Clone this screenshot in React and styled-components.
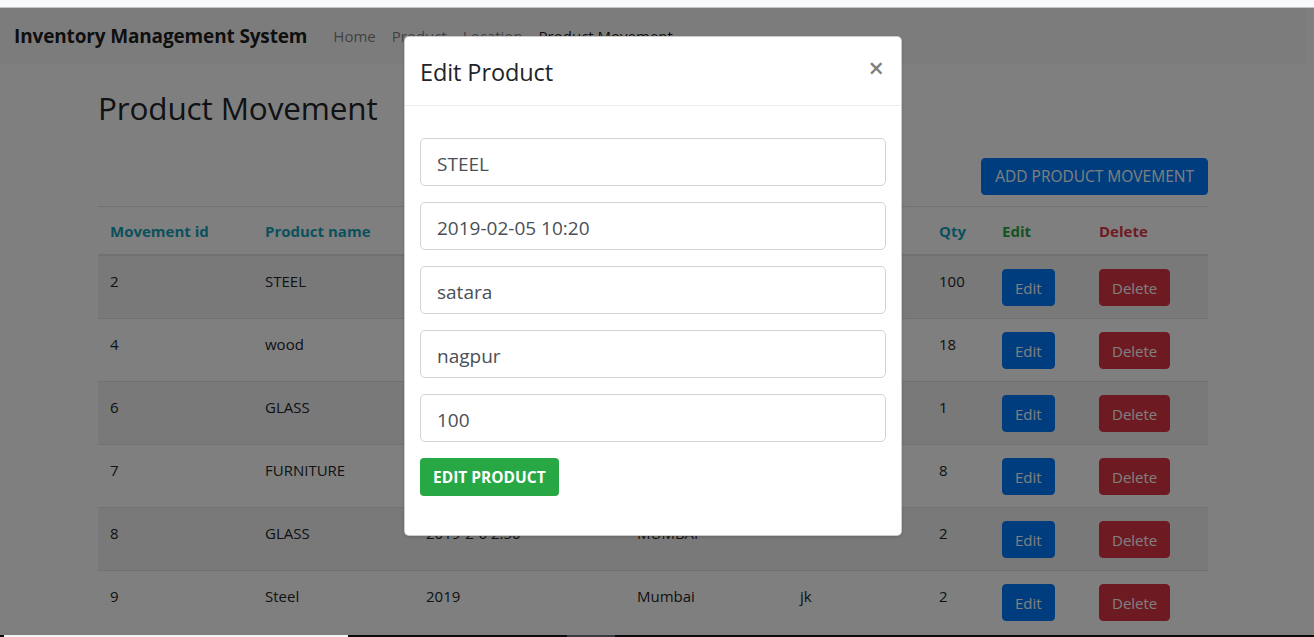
import React from 'react';
import styled, { createGlobalStyle } from 'styled-components';

const GlobalStyle = createGlobalStyle`
    html, body {
        margin: 0;
        padding: 0;
        overflow: hidden;
    }
    body {
        font-family: "Open Sans", "Noto Sans", Arial, sans-serif;
        color: #212529;
        background: #fff;
    }
    * {
        box-sizing: border-box;
    }
`;

const movements = [
    { id: 2, product: 'STEEL', time: '2019-02-05 10:20', from: 'satara', to: 'nagpur', qty: 100 },
    { id: 4, product: 'wood', time: '2019-02-05 11:00', from: 'pune', to: 'satara', qty: 18 },
    { id: 6, product: 'GLASS', time: '2019-02-06 09:15', from: 'nagpur', to: 'pune', qty: 1 },
    { id: 7, product: 'FURNITURE', time: '2019-02-06 12:40', from: 'pune', to: 'MUMBAI', qty: 8 },
    { id: 8, product: 'GLASS', time: '2019-2-6 2:50', from: 'MUMBAI', to: '', qty: 2 },
    { id: 9, product: 'Steel', time: '2019', from: 'Mumbai', to: 'jk', qty: 2 },
];

const columns = [
    { label: 'Movement id', width: 155, tone: 'info' },
    { label: 'Product name', width: 161, tone: 'info' },
    { label: 'Timestamp', width: 211, tone: 'info' },
    { label: 'From location', width: 163, tone: 'info' },
    { label: 'To location', width: 139, tone: 'info' },
    { label: 'Qty', width: 63, tone: 'info' },
    { label: 'Edit', width: 97, tone: 'success' },
    { label: 'Delete', width: 121, tone: 'danger' },
];

const tones = {
    info: '#17a2b8',
    success: '#28a745',
    danger: '#dc3545',
    primary: '#007bff',
};

const fields = ['STEEL', '2019-02-05 10:20', 'satara', 'nagpur', '100'];

const App = () => {
    return (
        <Screen>
            <GlobalStyle />
            <BrowserStrip />
            <Viewport>
                <Page>
                    <Navbar>
                        <Brand>Inventory Management System</Brand>
                        <NavLinks>
                            <NavLink>Home</NavLink>
                            <NavLink>Product</NavLink>
                            <NavLink>Location</NavLink>
                            <NavLink active>Product Movement</NavLink>
                        </NavLinks>
                    </Navbar>
                    <Container>
                        <Heading>Product Movement</Heading>
                        <Toolbar>
                            <Button tone="primary">ADD PRODUCT MOVEMENT</Button>
                        </Toolbar>
                        <Table>
                            <thead>
                                <tr>
                                    {columns.map((col) => (
                                        <Th key={col.label} tone={col.tone} style={{ width: col.width }}>
                                            {col.label}
                                        </Th>
                                    ))}
                                </tr>
                            </thead>
                            <tbody>
                                {movements.map((m, i) => (
                                    <Row key={m.id} striped={i % 2 === 0}>
                                        <Td>{m.id}</Td>
                                        <Td>{m.product}</Td>
                                        <Td>{m.time}</Td>
                                        <Td>{m.from}</Td>
                                        <Td>{m.to}</Td>
                                        <Td>{m.qty}</Td>
                                        <Td>
                                            <RowButton tone="primary">Edit</RowButton>
                                        </Td>
                                        <Td>
                                            <RowButton tone="danger">Delete</RowButton>
                                        </Td>
                                    </Row>
                                ))}
                            </tbody>
                        </Table>
                    </Container>
                </Page>
                <Gutter />
                <Backdrop />
                <ModalLayer>
                    <Modal>
                        <ModalHeader>
                            <ModalTitle>Edit Product</ModalTitle>
                            <Close>&times;</Close>
                        </ModalHeader>
                        <ModalBody>
                            {fields.map((value) => (
                                <Input key={value} defaultValue={value} />
                            ))}
                            <SubmitButton>EDIT PRODUCT</SubmitButton>
                        </ModalBody>
                    </Modal>
                </ModalLayer>
            </Viewport>
            <Taskbar>
                <TaskSegment w={4} color="#0a0a0a" />
                <TaskSegment w={344} color="#f4f4f4" />
                <TaskSegment w={219} color="#0a0a0a" />
                <TaskSegment w={48} color="#3a3a3e" />
                <TaskSegment grow color="#0a0a0a" />
            </Taskbar>
        </Screen>
    );
};

const Screen = styled.div`
    display: flex;
    flex-direction: column;
    width: 1314px;
    height: 637px;
    overflow: hidden;
`;

const BrowserStrip = styled.div`
    height: 8px;
    flex: none;
    background: #f8f9fa;
    border-bottom: 1px solid #c4c6c4;
`;

const Viewport = styled.div`
    position: relative;
    flex: 1;
    display: flex;
    overflow: hidden;
`;

const Page = styled.div`
    width: 1306px;
    flex: none;
    background: #fff;
`;

const Gutter = styled.div`
    flex: 1;
    background: #fff;
`;

const Navbar = styled.nav`
    display: flex;
    align-items: center;
    height: 56px;
    padding: 0 16px 0 14px;
    background-color: #f8f9fa;
`;

const Brand = styled.div`
    font-size: 19px;
    font-weight: 700;
    color: rgba(0, 0, 0, 0.9);
    margin-right: 18px;
    letter-spacing: -0.15px;
`;

const NavLinks = styled.div`
    display: flex;
`;

const NavLink = styled.a`
    padding: 8px;
    font-size: 15px;
    color: ${(p) => (p.active ? 'rgba(0, 0, 0, 0.9)' : 'rgba(0, 0, 0, 0.5)')};
`;

const Container = styled.div`
    width: 1110px;
    margin: 0 auto;
`;

const Heading = styled.h2`
    margin: 25px 0 0;
    font-size: 31.5px;
    font-weight: 500;
    line-height: 1.2;
    letter-spacing: -0.15px;
`;

const Toolbar = styled.div`
    display: flex;
    justify-content: flex-end;
    margin-top: 31px;
    margin-bottom: 11px;
`;

const Button = styled.button`
    height: 37px;
    padding: 0 13px;
    border: 1px solid ${(p) => tones[p.tone]};
    border-radius: 4px;
    background-color: ${(p) => tones[p.tone]};
    color: #fff;
    font-family: inherit;
    font-size: 15.5px;
    line-height: 1.5;
`;

const RowButton = styled(Button)`
    padding: 0 12px;
    font-size: 15px;
`;

const Table = styled.table`
    width: 100%;
    table-layout: fixed;
    border-collapse: collapse;
`;

const Th = styled.th`
    text-align: left;
    padding: 12px;
    height: 49px;
    font-size: 15px;
    font-weight: 700;
    color: ${(p) => tones[p.tone]};
    border-top: 1px solid #dee2e6;
    border-bottom: 2px solid #dee2e6;
`;

const Row = styled.tr`
    background-color: ${(p) => (p.striped ? 'rgba(0, 0, 0, 0.05)' : 'transparent')};
`;

const Td = styled.td`
    height: 63px;
    padding: 13px 12px 12px;
    vertical-align: top;
    font-size: 15px;
    line-height: 24px;
    border-top: 1px solid #dee2e6;
`;

const Backdrop = styled.div`
    position: absolute;
    inset: 0;
    background-color: rgba(0, 0, 0, 0.5);
`;

const ModalLayer = styled.div`
    position: absolute;
    top: 0;
    left: 0;
    width: 1306px;
    display: flex;
    justify-content: center;
    padding-top: 28px;
`;

const Modal = styled.div`
    width: 498px;
    background: #fff;
    border: 1px solid rgba(0, 0, 0, 0.2);
    border-radius: 5px;
    box-shadow: 0 1px 3px rgba(0, 0, 0, 0.15);
`;

const ModalHeader = styled.div`
    display: flex;
    align-items: flex-start;
    padding: 17px 15px 15px;
    border-bottom: 1px solid #e9ecef;
`;

const ModalTitle = styled.h5`
    margin: 0;
    font-size: 23.5px;
    font-weight: 500;
    line-height: 36px;
    letter-spacing: -0.1px;
`;

const Close = styled.span`
    margin-left: auto;
    margin-right: 2px;
    margin-top: -4px;
    font-size: 27px;
    font-weight: 600;
    line-height: 36px;
    color: #000;
    opacity: 0.5;
`;

const ModalBody = styled.div`
    display: flex;
    flex-direction: column;
    align-items: flex-start;
    gap: 16px;
    padding: 32px 15px 39px;
`;

const Input = styled.input`
    width: 100%;
    height: 48px;
    padding: 3px 16px 0;
    border: 1px solid #ced4da;
    border-radius: 5px;
    font-family: inherit;
    font-size: 19px;
    color: #495057;
    outline: none;
`;

const SubmitButton = styled.button`
    height: 38px;
    padding: 0 13px;
    border: 0;
    border-radius: 4px;
    background-color: #28a745;
    color: #fff;
    font-family: inherit;
    font-size: 15.5px;
    font-weight: 700;
`;

const Taskbar = styled.div`
    display: flex;
    height: 2px;
    flex: none;
`;

const TaskSegment = styled.div`
    width: ${(p) => (p.grow ? 'auto' : `${p.w}px`)};
    flex: ${(p) => (p.grow ? 1 : 'none')};
    background-color: ${(p) => p.color};
`;

export default App;
